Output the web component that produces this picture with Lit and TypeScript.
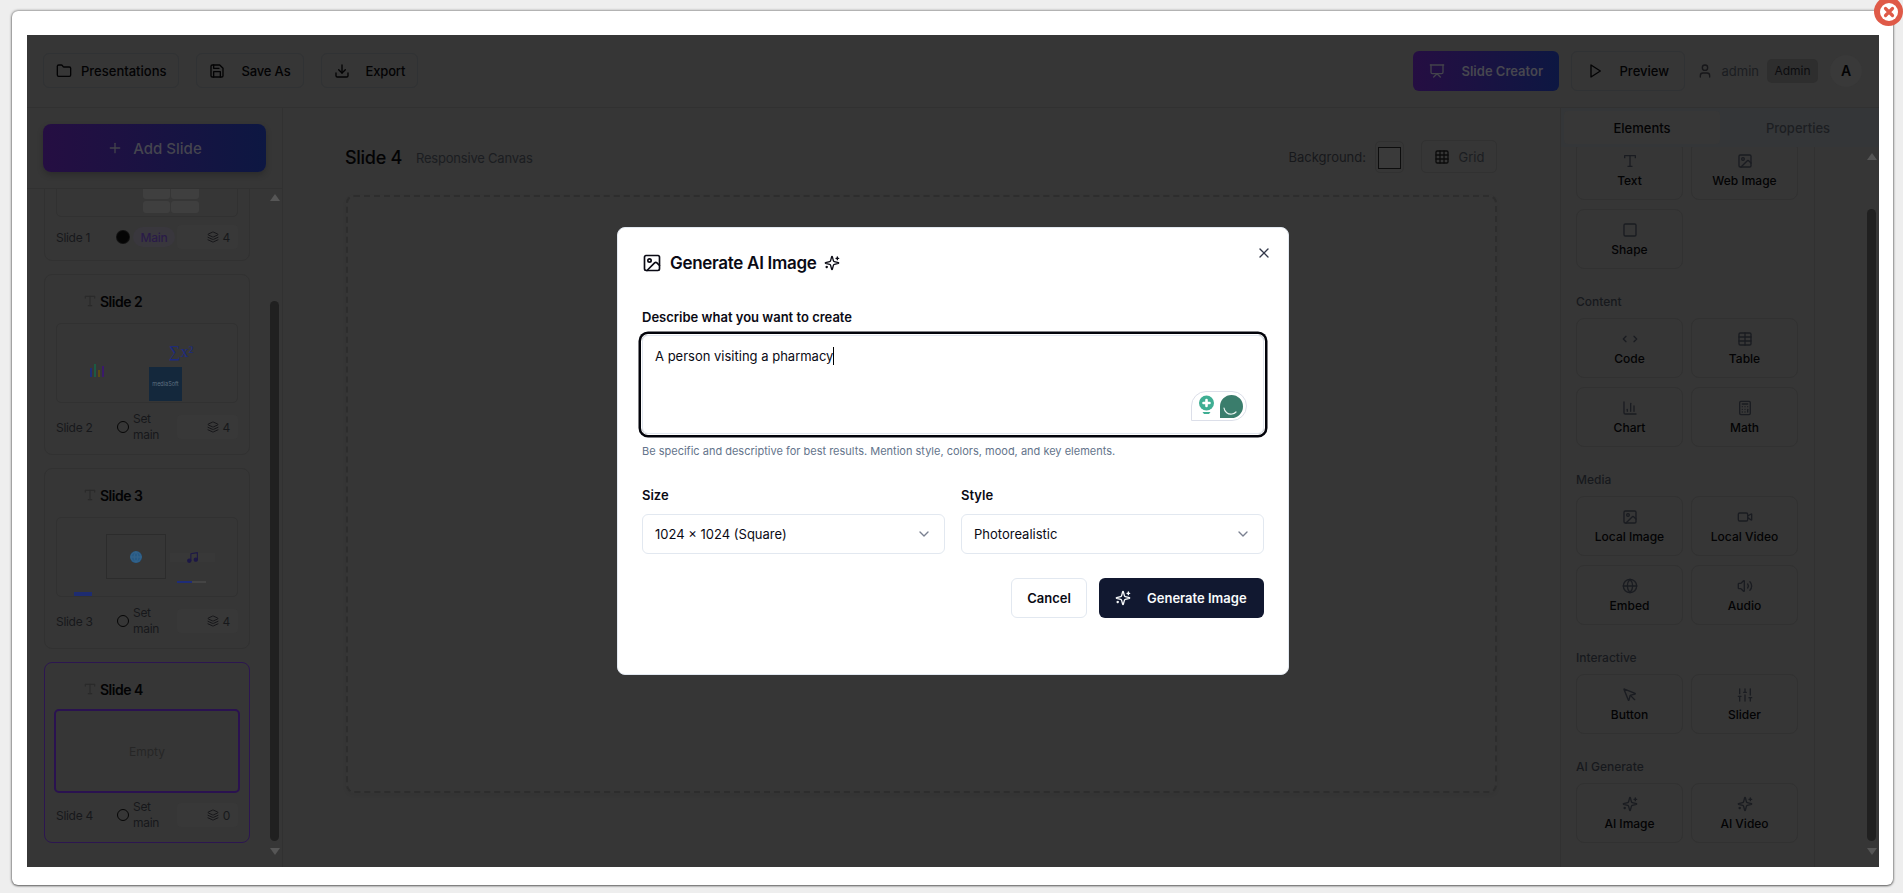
import { LitElement, html, css, svg } from 'lit';
import { customElement } from 'lit/decorators.js';

const paths: Record<string, any> = {
  folder: svg`<path d="M20 20a2 2 0 0 0 2-2V8a2 2 0 0 0-2-2h-7.9a2 2 0 0 1-1.69-.9L9.6 3.9A2 2 0 0 0 7.93 3H4a2 2 0 0 0-2 2v13a2 2 0 0 0 2 2Z"/>`,
  save: svg`<path d="M19 21H5a2 2 0 0 1-2-2V5a2 2 0 0 1 2-2h11l5 5v11a2 2 0 0 1-2 2z"/><path d="M17 21v-8H7v8"/><path d="M7 3v5h8"/>`,
  download: svg`<path d="M21 15v4a2 2 0 0 1-2 2H5a2 2 0 0 1-2-2v-4"/><path d="m7 10 5 5 5-5"/><path d="M12 15V3"/>`,
  presentation: svg`<path d="M2 3h20"/><path d="M21 3v11a2 2 0 0 1-2 2H5a2 2 0 0 1-2-2V3"/><path d="m7 21 5-5 5 5"/>`,
  play: svg`<polygon points="6 3 20 12 6 21 6 3"/>`,
  user: svg`<path d="M19 21v-2a4 4 0 0 0-4-4H9a4 4 0 0 0-4 4v2"/><circle cx="12" cy="7" r="4"/>`,
  plus: svg`<path d="M5 12h14"/><path d="M12 5v14"/>`,
  grid: svg`<rect x="3" y="3" width="18" height="18" rx="2"/><path d="M3 9h18"/><path d="M3 15h18"/><path d="M9 3v18"/><path d="M15 3v18"/>`,
  layers: svg`<path d="M12.83 2.18a2 2 0 0 0-1.66 0L2.6 6.08a1 1 0 0 0 0 1.83l8.58 3.91a2 2 0 0 0 1.66 0l8.58-3.9a1 1 0 0 0 0-1.83Z"/><path d="m22 17.65-9.17 4.16a2 2 0 0 1-1.66 0L2 17.65"/><path d="m22 12.65-9.17 4.16a2 2 0 0 1-1.66 0L2 12.65"/>`,
  type: svg`<polyline points="4 7 4 4 20 4 20 7"/><line x1="9" y1="20" x2="15" y2="20"/><line x1="12" y1="4" x2="12" y2="20"/>`,
  image: svg`<rect x="3" y="3" width="18" height="18" rx="2"/><circle cx="9" cy="9" r="2"/><path d="m21 15-3.086-3.086a2 2 0 0 0-2.828 0L6 21"/>`,
  square: svg`<rect x="3" y="3" width="18" height="18" rx="2"/>`,
  code: svg`<path d="m18 16 4-4-4-4"/><path d="m6 8-4 4 4 4"/>`,
  table: svg`<rect x="3" y="3" width="18" height="18" rx="2"/><path d="M3 9h18"/><path d="M3 15h18"/><path d="M12 3v18"/>`,
  chart: svg`<path d="M3 3v16a2 2 0 0 0 2 2h16"/><path d="M18 17V9"/><path d="M13 17V5"/><path d="M8 17v-3"/>`,
  calculator: svg`<rect x="4" y="2" width="16" height="20" rx="2"/><line x1="8" y1="6" x2="16" y2="6"/><line x1="16" y1="14" x2="16" y2="18"/><path d="M16 10h.01"/><path d="M12 10h.01"/><path d="M8 10h.01"/><path d="M12 14h.01"/><path d="M8 14h.01"/><path d="M12 18h.01"/><path d="M8 18h.01"/>`,
  video: svg`<path d="m16 13 5.223 3.482a.5.5 0 0 0 .777-.416V7.87a.5.5 0 0 0-.752-.432L16 10.5"/><rect x="2" y="6" width="14" height="12" rx="2"/>`,
  globe: svg`<circle cx="12" cy="12" r="10"/><path d="M12 2a14.5 14.5 0 0 0 0 20 14.5 14.5 0 0 0 0-20"/><path d="M2 12h20"/>`,
  volume: svg`<path d="M11 4.702a.705.705 0 0 0-1.203-.498L6.413 7.587A1.4 1.4 0 0 1 5.416 8H3a1 1 0 0 0-1 1v6a1 1 0 0 0 1 1h2.416a1.4 1.4 0 0 1 .997.413l3.383 3.384A.705.705 0 0 0 11 19.298z"/><path d="M16 9a5 5 0 0 1 0 6"/><path d="M19.364 18.364a9 9 0 0 0 0-12.728"/>`,
  pointer: svg`<path d="M12.586 12.586 19 19"/><path d="M3.688 3.037a.497.497 0 0 0-.651.651l6.5 15.999a.501.501 0 0 0 .947-.062l1.569-6.083a2 2 0 0 1 1.448-1.479l6.124-1.579a.5.5 0 0 0 .063-.947z"/>`,
  sliders: svg`<path d="M4 21v-7"/><path d="M4 10V3"/><path d="M12 21v-9"/><path d="M12 8V3"/><path d="M20 21v-5"/><path d="M20 12V3"/><path d="M2 14h4"/><path d="M10 8h4"/><path d="M18 16h4"/>`,
  sparkles: svg`<path d="M9.937 15.5A2 2 0 0 0 8.5 14.063l-6.135-1.582a.5.5 0 0 1 0-.962L8.5 9.936A2 2 0 0 0 9.937 8.5l1.582-6.135a.5.5 0 0 1 .963 0L14.063 8.5A2 2 0 0 0 15.5 9.937l6.135 1.581a.5.5 0 0 1 0 .964L15.5 14.063a2 2 0 0 0-1.437 1.437l-1.582 6.135a.5.5 0 0 1-.963 0z"/><path d="M20 3v4"/><path d="M22 5h-4"/><path d="M4 17v2"/><path d="M5 18H3"/>`,
  x: svg`<path d="M18 6 6 18"/><path d="m6 6 12 12"/>`,
  chevron: svg`<path d="m6 9 6 6 6-6"/>`,
  music: svg`<path d="M9 18V5l12-2v13"/><circle cx="6" cy="18" r="3" fill="currentColor"/><circle cx="18" cy="16" r="3" fill="currentColor"/>`,
};

const icon = (name: string, size = 16) => html`<svg class="icon" width="${size}" height="${size}" viewBox="0 0 24 24" fill="none" stroke="currentColor" stroke-width="2" stroke-linecap="round" stroke-linejoin="round">${paths[name]}</svg>`;

const sections = [
  { label: '', items: [['type', 'Text'], ['image', 'Web Image'], ['square', 'Shape']] },
  { label: 'Content', items: [['code', 'Code'], ['table', 'Table'], ['chart', 'Chart'], ['calculator', 'Math']] },
  { label: 'Media', items: [['image', 'Local Image'], ['video', 'Local Video'], ['globe', 'Embed'], ['volume', 'Audio']] },
  { label: 'Interactive', items: [['pointer', 'Button'], ['sliders', 'Slider']] },
  { label: 'AI Generate', items: [['sparkles', 'AI Image'], ['sparkles', 'AI Video']] },
];

const slides = [
  { n: 1, main: true, count: 4 },
  { n: 2, main: false, count: 4 },
  { n: 3, main: false, count: 4 },
  { n: 4, main: false, count: 0, active: true },
];

@customElement('app-root')
export class AppRoot extends LitElement {
  static styles = css`
    :host {
      display: block;
      height: 893px;
      overflow: hidden;
      background: #eeeeee;
      font-family: Inter, "Liberation Sans", sans-serif;
      padding: 11px 10px 0 12px;
      box-sizing: border-box;
    }
    * { box-sizing: border-box; }
    .icon { display: block; flex: none; }

    .lightbox {
      position: relative;
      width: 1881px;
      height: 874px;
      padding: 24px 14px 18px 15px;
      background: #fff;
      border-radius: 6px;
      box-shadow: 0 0 3px rgba(0,0,0,.65), 0 1px 2px rgba(0,0,0,.4);
    }
    .lightbox-close {
      position: absolute;
      top: -14px;
      right: -10px;
      width: 29px;
      height: 29px;
      border-radius: 50%;
      background: #df5a48;
      display: flex;
      align-items: center;
      justify-content: center;
    }
    .lightbox-close span {
      width: 18px;
      height: 18px;
      border-radius: 50%;
      background: #fff;
      display: flex;
      align-items: center;
      justify-content: center;
    }
    .lightbox-close svg { display: block; }

    .frame {
      position: relative;
      height: 832px;
      background: #363636;
      color: #030304;
      display: flex;
      flex-direction: column;
      overflow: hidden;
    }

    .topbar {
      height: 73px;
      flex: none;
      border-bottom: 1px solid #313131;
      display: flex;
      align-items: center;
      justify-content: space-between;
      padding: 0 17px 1px 16px;
    }
    .group { display: flex; align-items: center; gap: 17px; }
    .group.right { gap: 12px; }
    .btn {
      height: 35px;
      display: flex;
      align-items: center;
      gap: 9px;
      padding: 0 12px;
      border: 1px solid #303234;
      border-radius: 6px;
      font-size: 13px;
      font-weight: 500;
      white-space: nowrap;
    }
    .btn.wide { gap: 16px; letter-spacing: -0.15px; }
    .btn.tall { height: 40px; padding: 0 15px; gap: 17px; letter-spacing: 0; }
    .btn.preview { width: 114px; }
    .btn.creator {
      width: 146px;
      border: 0;
      color: #47474f;
      font-weight: 600;
      padding: 0 16px;
      background: linear-gradient(90deg, #250e42, #0d1742);
    }
    .creator .icon, .add .icon { color: #43434b; }
    .user { display: flex; align-items: center; gap: 9px; color: #1b1d21; font-size: 13px; }
    .user .icon { color: #17171a; }
    .role {
      margin-left: -4px;
      height: 24px;
      width: 51px;
      display: flex;
      align-items: center;
      justify-content: center;
      background: #2e2e2e;
      color: #0c0c0e;
      border-radius: 5px;
      font-size: 12px;
    }
    .avatar {
      width: 32px;
      height: 32px;
      border-radius: 50%;
      background: #393939;
      display: flex;
      align-items: center;
      justify-content: center;
      font-size: 14px;
      font-weight: 600;
    }

    .body { flex: 1; display: flex; min-height: 0; }

    .sidebar {
      width: 256px;
      flex: none;
      border-right: 1px solid #313131;
      display: flex;
      flex-direction: column;
    }
    .sidebar-head {
      height: 81px;
      flex: none;
      padding: 16px 16px 0;
      border-bottom: 1px solid #313131;
    }
    .add {
      height: 48px;
      display: flex;
      align-items: center;
      justify-content: center;
      gap: 10px;
      border-radius: 8px;
      font-size: 15px;
      font-weight: 500;
      color: #45454f;
      background: linear-gradient(90deg, #250e42, #0d1742);
      box-shadow: 0 3px 6px rgba(0,0,0,.2);
    }
    .sidebar-scroll { flex: 1; display: flex; min-height: 0; overflow: hidden; }
    .slide-list {
      flex: 1;
      padding: 0 17px;
      display: flex;
      flex-direction: column;
      gap: 13px;
      margin-top: -101px;
    }
    .slide {
      width: 206px;
      flex: none;
      border: 1px solid #313131;
      border-radius: 8px;
      padding: 0 11px 11px;
    }
    .slide.active { border-color: #2c1650; }
    .slide-title {
      height: 48px;
      display: flex;
      align-items: center;
      gap: 3px;
      padding: 4px 0 0 27px;
      font-size: 14px;
      font-weight: 600;
      letter-spacing: -0.5px;
    }
    .slide-title .icon { color: #2a2a2a; }
    .thumb {
      position: relative;
      height: 80px;
      border: 1px solid #313131;
      border-radius: 5px;
      overflow: hidden;
    }
    .slide.active .thumb {
      margin: -2px -2px 0;
      height: 84px;
      border: 2px solid #2a1250;
      display: flex;
      align-items: center;
      justify-content: center;
      font-size: 12px;
      color: #262626;
    }
    .tile { position: absolute; background: #3f3f3f; border-radius: 3px; }
    .mini-bars {
      position: absolute;
      left: 33px;
      top: 40px;
      display: flex;
      align-items: flex-end;
      gap: 2px;
      height: 13px;
    }
    .mini-bars i { display: block; width: 2px; }
    .mini-math {
      position: absolute;
      left: 112px;
      top: 18px;
      font-family: "Liberation Serif", serif;
      font-size: 16px;
      line-height: 20px;
      color: #1c2a80;
    }
    .mini-photo {
      position: absolute;
      left: 92px;
      top: 43px;
      width: 33px;
      height: 34px;
      background: #14283c;
      color: #5f7080;
      font-size: 5.5px;
      display: flex;
      align-items: center;
      justify-content: center;
    }
    .mini-embed {
      position: absolute;
      left: 49px;
      top: 16px;
      width: 60px;
      height: 45px;
      border: 1px solid #2c2c2c;
      color: #36648a;
      display: flex;
      align-items: center;
      justify-content: center;
    }
    .mini-embed span { display: block; border-radius: 50%; background: #265a86; }
    .mini-audio {
      position: absolute;
      left: 113px;
      top: 35px;
      width: 45px;
      height: 9px;
      background: #383838;
      color: #1d1846;
      display: flex;
      align-items: center;
      justify-content: center;
    }
    .mini-slider {
      position: absolute;
      left: 120px;
      top: 63px;
      width: 29px;
      height: 2px;
      background: linear-gradient(90deg, #1e2c78 50%, #444 50%);
    }
    .mini-button { position: absolute; left: 17px; top: 74px; width: 18px; height: 6px; background: #1e2c70; }

    .slide-meta {
      min-height: 24px;
      margin-top: 8px;
      display: flex;
      align-items: center;
      font-size: 12px;
      letter-spacing: -0.3px;
      color: #17181b;
    }
    .slide.active .slide-meta { margin-top: 6px; }
    .slide-name { width: 61px; flex: none; }
    .radio {
      width: 12px;
      height: 12px;
      flex: none;
      border: 1.5px solid #060606;
      border-radius: 50%;
      margin-right: 4px;
    }
    .radio.on { background: #050505; border-color: #050505; box-shadow: 0 0 0 1px #111; }
    .set-main { width: 44px; padding-right: 12px; flex: none; line-height: 16px; color: #17181b; }
    .main-pill {
      width: 42px;
      height: 20px;
      flex: none;
      margin-right: 2px;
      border-radius: 10px;
      background: #39373d;
      color: #2a1b48;
      font-weight: 500;
      font-size: 12px;
      display: flex;
      align-items: center;
      justify-content: center;
    }
    .count {
      flex: 1;
      height: 24px;
      display: flex;
      align-items: center;
      justify-content: flex-end;
      gap: 4px;
      padding-right: 8px;
      border-radius: 4px;
      background: #383838;
    }
    .count .icon { color: #17171a; }

    .track {
      width: 15px;
      flex: none;
      display: flex;
      flex-direction: column;
      align-items: center;
      padding-bottom: 12px;
    }
    .arrow-up, .arrow-down { width: 0; height: 0; border-left: 5px solid transparent; border-right: 5px solid transparent; flex: none; }
    .arrow-up { border-bottom: 7px solid #565656; }
    .arrow-down { border-top: 7px solid #565656; }
    .thumbbar { width: 9px; flex: 1; background: #202020; border-radius: 5px; margin: 0 0 7px; }
    .sidebar-scroll .arrow-up { margin: 5px 0 100px; }
    .panel-scroll .arrow-up { margin: 6px 0 49px; }

    .center { flex: 1; padding: 0 63px; display: flex; flex-direction: column; min-width: 0; }
    .canvas-head {
      height: 87px;
      flex: none;
      display: flex;
      align-items: center;
      padding: 12px 0 0;
    }
    .canvas-title { margin-left: -1px; font-size: 18px; font-weight: 500; letter-spacing: -0.3px; }
    .canvas-sub { margin-left: 14px; font-size: 13px; letter-spacing: -0.2px; color: #1b1d21; }
    .canvas-tools { margin: -2px 0 0 auto; display: flex; align-items: center; font-size: 13px; color: #17181b; }
    .swatch {
      margin-left: 9px;
      width: 29px;
      height: 32px;
      border: 1px solid #313131;
      border-radius: 5px;
      padding: 5px 2px;
    }
    .swatch span { display: block; height: 22px; border: 1px solid #0d0d0d; background: #3a3a3a; }
    .grid-btn {
      margin-left: 17px;
      width: 76px;
      height: 33px;
      border: 1px solid #313131;
      border-radius: 5px;
      display: flex;
      align-items: center;
      justify-content: center;
      gap: 9px;
      font-size: 13px;
      color: #1b1d21;
    }
    .grid-btn .icon { color: #0c0c0c; }
    .canvas {
      height: 598px;
      flex: none;
      border: 2px dashed #2d2d2d;
      border-radius: 8px;
      box-shadow: 0 2px 4px rgba(0,0,0,.05);
    }

    .side-panel {
      width: 319px;
      flex: none;
      display: flex;
      flex-direction: column;
      border-left: 1px solid #313131;
    }
    .tabs {
      height: 39px;
      flex: none;
      display: grid;
      grid-template-columns: 1fr 1fr;
      padding: 3px;
      background: #343638;
      font-size: 13px;
      font-weight: 500;
    }
    .tab { display: flex; align-items: center; justify-content: center; border-radius: 4px; color: #1c1e22; }
    .tab.on { background: #373737; color: #030304; }
    .panel-scroll { flex: 1; display: flex; min-height: 0; overflow: hidden; }
    .panel-col {
      width: 254px;
      flex: none;
      border-right: 1px solid #313131;
      padding: 0 16px 0 15px;
      margin-top: -7px;
    }
    .spacer { flex: 1; }
    .section-label {
      margin: 25px 0 8px;
      height: 16px;
      font-size: 12px;
      line-height: 16px;
      font-weight: 500;
      color: #17191d;
    }
    .cards { display: grid; grid-template-columns: 1fr 1fr; gap: 9px 8px; }
    .card {
      height: 60px;
      border: 1px solid #313131;
      border-radius: 8px;
      padding-top: 12px;
      display: flex;
      flex-direction: column;
      align-items: center;
      gap: 4px;
      font-size: 12px;
      line-height: 16px;
      font-weight: 500;
    }
    .card .icon { color: #1a1c21; }

    .overlay {
      position: absolute;
      inset: 0;
      display: flex;
      align-items: center;
      justify-content: center;
    }
    .modal {
      position: relative;
      width: 672px;
      height: 448px;
      background: #fff;
      border: 1px solid #e2e8f0;
      border-radius: 8px;
      padding: 23px 24px 0;
      color: #0a0a14;
    }
    .modal-x { position: absolute; top: 17px; right: 16px; color: #33384a; }
    .modal-title {
      height: 24px;
      display: flex;
      align-items: center;
      gap: 8px;
      font-size: 17px;
      font-weight: 600;
      letter-spacing: -0.3px;
    }
    .label {
      display: block;
      font-size: 13px;
      font-weight: 600;
      line-height: 20px;
    }
    .label.first { margin-top: 32px; }
    .textarea {
      position: relative;
      margin-top: 8px;
      height: 99px;
      border: 1px solid #e2e8f0;
      border-radius: 6px;
      box-shadow: 0 0 0 1px #fff, 0 0 0 3.5px #02030a;
      padding: 11px 12px;
      font-size: 13px;
      line-height: 18px;
    }
    .caret {
      display: inline-block;
      width: 1px;
      height: 18px;
      background: #000;
      vertical-align: top;
    }
    .widget { position: absolute; right: 16px; bottom: 12px; display: block; }
    .hint { margin-top: 9px; font-size: 11px; line-height: 16px; color: #64748b; }
    .fields { margin-top: 26px; display: grid; grid-template-columns: 1fr 1fr; gap: 16px; }
    .select {
      margin-top: 9px;
      height: 40px;
      border: 1px solid #e2e8f0;
      border-radius: 6px;
      display: flex;
      align-items: center;
      justify-content: space-between;
      padding: 0 12px;
      font-size: 13px;
    }
    .select .icon { color: #7a8090; }
    .actions { margin-top: 24px; display: flex; justify-content: flex-end; gap: 12px; }
    .m-btn {
      height: 40px;
      border-radius: 6px;
      display: flex;
      align-items: center;
      font-size: 13px;
      font-weight: 600;
    }
    .m-btn.cancel { width: 76px; justify-content: center; border: 1px solid #e2e8f0; background: #fff; }
    .m-btn.go { width: 165px; padding-left: 16px; gap: 16px; background: #111830; color: #f8fafc; }
  `;

  renderThumb(n: number) {
    if (n === 1) {
      return html`
        <div class="tile" style="left:86px;top:36px;width:27px;height:25px"></div>
        <div class="tile" style="left:114px;top:36px;width:28px;height:25px"></div>
        <div class="tile" style="left:86px;top:63px;width:27px;height:12px"></div>
        <div class="tile" style="left:114px;top:63px;width:28px;height:12px"></div>`;
    }
    if (n === 2) {
      return html`
        <div class="mini-bars">
          <i style="height:9px;background:#1e2c78"></i>
          <i style="height:13px;background:#1c5a44"></i>
          <i style="height:7px;background:#5c4a12"></i>
          <i style="height:11px;background:#3a1a6a"></i>
        </div>
        <div class="mini-math">∑x²</div>
        <div class="mini-photo">mediaSoft</div>`;
    }
    if (n === 3) {
      return html`
        <div class="mini-embed"><span>${icon('globe', 12)}</span></div>
        <div class="mini-audio">${icon('music', 13)}</div>
        <div class="mini-slider"></div>
        <div class="mini-button"></div>`;
    }
    return html`Empty`;
  }

  renderSlide(s: any) {
    return html`
      <div class="slide ${s.active ? 'active' : ''}">
        <div class="slide-title">${s.n === 1 ? '' : html`${icon('type', 14)}<span>Slide ${s.n}</span>`}</div>
        <div class="thumb">${this.renderThumb(s.n)}</div>
        <div class="slide-meta">
          <span class="slide-name">Slide ${s.n}</span>
          <span class="radio ${s.main ? 'on' : ''}"></span>
          ${s.main ? html`<span class="main-pill">Main</span>` : html`<span class="set-main">Set main</span>`}
          <span class="count">${icon('layers', 12)}<span>${s.count}</span></span>
        </div>
      </div>`;
  }

  renderTrack() {
    return html`
      <div class="track">
        <div class="arrow-up"></div>
        <div class="thumbbar"></div>
        <div class="arrow-down"></div>
      </div>`;
  }

  renderModal() {
    return html`
      <div class="overlay">
        <div class="modal">
          <span class="modal-x">${icon('x', 16)}</span>
          <div class="modal-title">${icon('image', 20)}<span>Generate AI Image</span>${icon('sparkles', 16)}</div>
          <label class="label first">Describe what you want to create</label>
          <div class="textarea">
            A person visiting a pharmacy<span class="caret"></span>
            <svg class="widget" width="56" height="30" viewBox="0 0 56 30">
              <path d="M.5 29.5V15A14.5 14.5 0 0 1 15 .5h26a14.5 14.5 0 0 1 0 29z" fill="#fff" stroke="#dcdfe9"/>
              <circle cx="15.5" cy="12" r="7.500" fill="#3fae93"/>
              <path d="M15.500 9v6M12.500 12h6" stroke="#fff" stroke-width="2.600" stroke-linecap="round"/>
              <path d="M11.500 21h8l-1.500 2h-5z" fill="#3fae93"/>
              <path d="M29 27V15.500A11.500 11.500 0 1 1 40.500 27z" fill="#3a7d6c"/>
              <path d="M33 17c.5 4 4 6.500 8 6 2-.3 3-1 4-2" fill="none" stroke="#e8f2ef" stroke-width="1.200" stroke-linecap="round"/>
            </svg>
          </div>
          <div class="hint">Be specific and descriptive for best results. Mention style, colors, mood, and key elements.</div>
          <div class="fields">
            <div>
              <label class="label">Size</label>
              <div class="select"><span>1024 × 1024 (Square)</span>${icon('chevron', 16)}</div>
            </div>
            <div>
              <label class="label">Style</label>
              <div class="select"><span>Photorealistic</span>${icon('chevron', 16)}</div>
            </div>
          </div>
          <div class="actions">
            <div class="m-btn cancel">Cancel</div>
            <div class="m-btn go">${icon('sparkles', 16)}<span>Generate Image</span></div>
          </div>
        </div>
      </div>`;
  }

  render() {
    return html`
      <div class="lightbox">
        <div class="frame">
          <header class="topbar">
            <div class="group">
              <div class="btn">${icon('folder')}Presentations</div>
              <div class="btn wide">${icon('save')}Save As</div>
              <div class="btn wide">${icon('download')}Export</div>
            </div>
            <div class="group right">
              <div class="btn tall creator">${icon('presentation')}Slide Creator</div>
              <div class="btn tall preview">${icon('play')}Preview</div>
              <div class="user">${icon('user')}<span>admin</span></div>
              <div class="role">Admin</div>
              <div class="avatar">A</div>
            </div>
          </header>
          <div class="body">
            <aside class="sidebar">
              <div class="sidebar-head">
                <div class="add">${icon('plus')}Add Slide</div>
              </div>
              <div class="sidebar-scroll">
                <div class="slide-list">${slides.map((s) => this.renderSlide(s))}</div>
                ${this.renderTrack()}
              </div>
            </aside>
            <main class="center">
              <div class="canvas-head">
                <span class="canvas-title">Slide 4</span>
                <span class="canvas-sub">Responsive Canvas</span>
                <div class="canvas-tools">
                  <span>Background:</span>
                  <div class="swatch"><span></span></div>
                  <div class="grid-btn">${icon('grid')}Grid</div>
                </div>
              </div>
              <div class="canvas"></div>
            </main>
            <aside class="side-panel">
              <div class="tabs">
                <div class="tab on">Elements</div>
                <div class="tab">Properties</div>
              </div>
              <div class="panel-scroll">
                <div class="panel-col">
                  ${sections.map((sec) => html`
                    ${sec.label ? html`<div class="section-label">${sec.label}</div>` : ''}
                    <div class="cards">
                      ${sec.items.map(([ic, name]) => html`<div class="card">${icon(ic)}<span>${name}</span></div>`)}
                    </div>
                  `)}
                </div>
                <div class="spacer"></div>
                ${this.renderTrack()}
              </div>
            </aside>
          </div>
          ${this.renderModal()}
        </div>
        <div class="lightbox-close"><span><svg width="12" height="12" viewBox="0 0 12 12" fill="none" stroke="#df5a48" stroke-width="3.200" stroke-linecap="round"><path d="M2.500 2.500l7 7M9.500 2.500l-7 7"/></svg></span></div>
      </div>
    `;
  }
}
